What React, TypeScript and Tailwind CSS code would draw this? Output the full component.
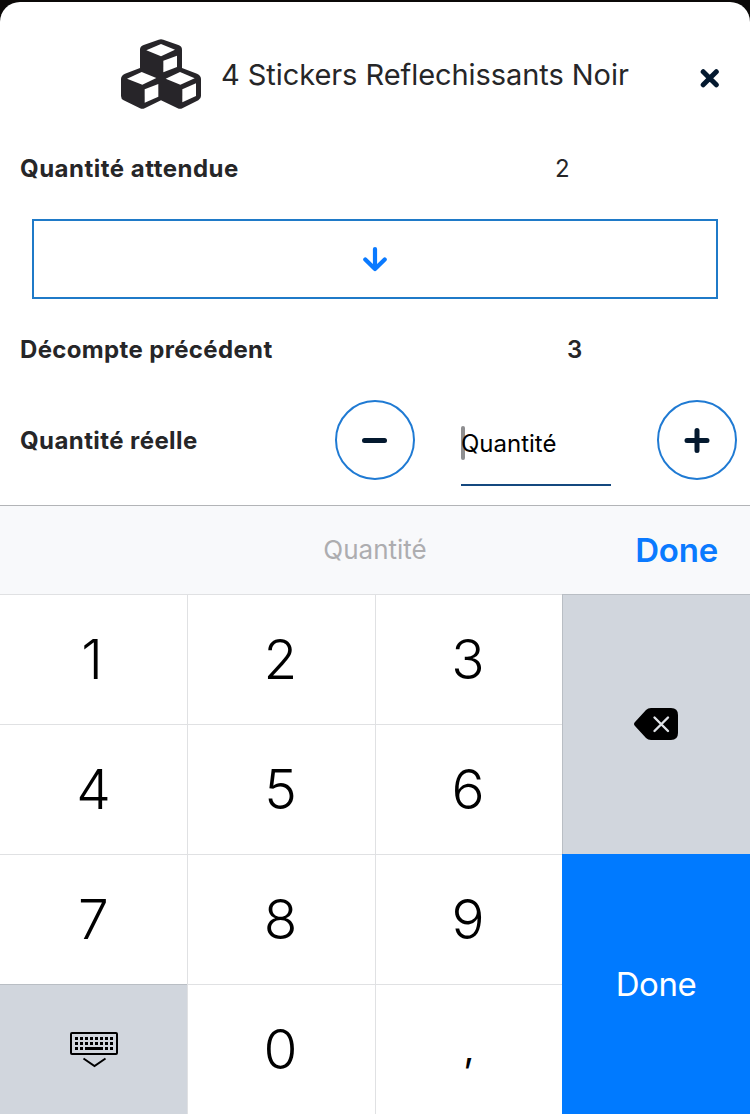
import type { ReactNode } from "react";

function CubesIcon() {
  return (
    <svg className="h-[70px] w-[80px] shrink-0" viewBox="363 117 240 210" fill="#272529">
      <path d="M476 119Q483 116 490 119L535 135Q546 139 546 149V204L591 221Q603 226 603 237V288Q603 296 595 301L547 325Q540 328 533 325L483 301L434 325Q427 328 420 325L371 301Q363 297 363 288V237Q363 226 375 221L420 204V149Q420 139 431 135Z" />
      <g fill="#fff">
        <path d="M483 132L525 149L483 169L439 151Z" />
        <path d="M490 182L531 167V201L490 217Z" />
        <path d="M425 216L469 234L427 254L381 236Z" />
        <path d="M434 268L475 252V290L434 308Z" />
        <path d="M540 216L584 235L541 254L497 236Z" />
        <path d="M547 268L588 250V288L547 307Z" />
      </g>
    </svg>
  );
}

function CloseIcon() {
  return (
    <svg className="size-5" viewBox="0 0 20 20" stroke="#04192f" strokeWidth="5" strokeLinecap="round">
      <path d="M3.200 3.700L16.300 16.800M16.300 3.700L3.200 16.800" />
    </svg>
  );
}

function ArrowDownIcon() {
  return (
    <svg className="h-[26px] w-[24px]" viewBox="0 0 24 26" fill="none" stroke="#0a7aff" strokeWidth="4.200" strokeLinecap="round" strokeLinejoin="round">
      <path d="M12 3V23M2.3 13.5L12 23L21.7 13.5" />
    </svg>
  );
}

function BackspaceIcon() {
  return (
    <svg className="h-8 w-11" viewBox="0 0 44 32">
      <path d="M17 0H37Q44 0 44 7V25Q44 32 37 32H17Q14 32 12 30L1 18Q-1 16 1 14L12 2Q14 0 17 0Z" fill="#000" />
      <path d="M20.500 9.500L34 23M34 9.500L20.500 23" stroke="#dfe2e7" strokeWidth="2.400" strokeLinecap="round" />
    </svg>
  );
}

function KeyboardIcon() {
  return (
    <svg className="h-[36px] w-[48px]" viewBox="0 0 48 36" fill="none" stroke="#000">
      <rect x="1" y="1" width="46" height="21" rx="1" strokeWidth="2" />
      <path d="M5 6.500H43" strokeWidth="3" strokeDasharray="3 2" />
      <path d="M5 11.500H43" strokeWidth="3" strokeDasharray="3 2" />
      <path d="M5 16.500H8M10 16.500H13M15 16.500H33M35 16.500H38M40 16.500H43" strokeWidth="3" />
      <path d="M13.500 26.500L24.500 34L35.500 26.500" strokeWidth="2" />
    </svg>
  );
}

function RoundButton({ children }: { children: ReactNode }) {
  return (
    <button className="flex size-20 items-center justify-center rounded-full border-2 border-[#1f7ad3]">
      {children}
    </button>
  );
}

function Key({ children, className = "" }: { children: ReactNode; className?: string }) {
  return (
    <button className={`flex items-center justify-center border-t border-l border-[#e0e1e3] bg-white leading-none text-black ${className}`}>
      {children}
    </button>
  );
}

export default function App() {
  return (
    <div className="h-[1114px] w-[750px] overflow-hidden bg-[#0b0908] pt-0.5 font-['Inter',sans-serif] text-[#262628]">
      <main className="flex h-[503px] flex-col rounded-t-[20px] bg-white">
        <header className="flex h-[119px] pt-[37px] pl-[121px]">
          <CubesIcon />
          <h1 className="mt-[18px] ml-[20px] w-[479px] text-[29px] leading-[36px] tracking-[-0.06px] whitespace-nowrap">
            4 Stickers Reflechissants Noir
          </h1>
          <button className="mt-[29px] h-5">
            <CloseIcon />
          </button>
        </header>
        <div className="flex h-[98px] items-center pb-0.5 pl-5 text-2xl">
          <span className="w-[535px] font-bold tracking-[0.5px]">Quantité attendue</span>
          <span>2</span>
        </div>
        <button className="mx-8 flex h-20 items-center justify-center border-2 border-[#1f7ac8]">
          <ArrowDownIcon />
        </button>
        <div className="flex h-[101px] items-center pl-5 text-2xl font-bold">
          <span className="w-[547px] tracking-[0.35px]">Décompte précédent</span>
          <span className="font-semibold">3</span>
        </div>
        <div className="flex h-20 pl-5 text-2xl">
          <span className="w-[315px] leading-[82px] font-bold tracking-[0.42px]">Quantité réelle</span>
          <RoundButton>
            <span className="mr-0.5 h-[5px] w-[25px] rounded-sm bg-[#04192f]" />
          </RoundButton>
          <div className="relative mr-[46px] ml-[46px] h-[86px] w-[150px] border-b-2 border-[#14487f] leading-[87px] text-black">
            <span className="absolute top-[26px] left-0 h-[34px] w-1 rounded-full bg-[#8e8e90]" />
            <span className="relative">Quantité</span>
          </div>
          <RoundButton>
            <svg className="mr-px size-[26px]" viewBox="0 0 26 26" stroke="#04192f" strokeWidth="5" strokeLinecap="round">
              <path d="M3 13.500H23M13 3.500V23.500" />
            </svg>
          </RoundButton>
        </div>
      </main>
      <div className="grid h-[89px] grid-cols-[250px_250px_1fr] items-center border-t border-[#b2b4b7] bg-[#f8f9fb]">
        <span className="col-start-2 pb-px text-center text-[26px] text-[#adadb0]">Quantité</span>
        <button className="pt-0.5 pr-8 text-right text-[33px] font-semibold tracking-[-0.2px] text-[#0a7aff]">Done</button>
      </div>
      <div className="grid h-[520px] grid-cols-[187px_188px_187px_188px] grid-rows-4 text-[55px] font-light">
        <Key className="border-l-0 pr-[3px]">1</Key>
        <Key className="pr-0.5">2</Key>
        <Key className="pr-0.5">3</Key>
        <button className="row-span-2 flex items-center justify-center border-t border-l border-[#b9bec4] bg-[#d1d6dd] pr-px pb-0.5">
          <BackspaceIcon />
        </button>
        <Key className="border-l-0">4</Key>
        <Key className="pr-0.5">5</Key>
        <Key className="pr-0.5">6</Key>
        <Key className="border-l-0">7</Key>
        <Key className="pr-0.5">8</Key>
        <Key className="pr-0.5">9</Key>
        <button className="row-span-2 bg-[#007aff] pt-0.5 text-[33px] font-normal tracking-[-0.4px] text-white">Done</button>
        <button className="flex items-center justify-center border-t border-[#b9bec4] bg-[#d1d6dd]">
          <KeyboardIcon />
        </button>
        <Key className="pr-0.5">0</Key>
        <Key className="pb-1 text-[38px] font-normal">,</Key>
      </div>
    </div>
  );
}
